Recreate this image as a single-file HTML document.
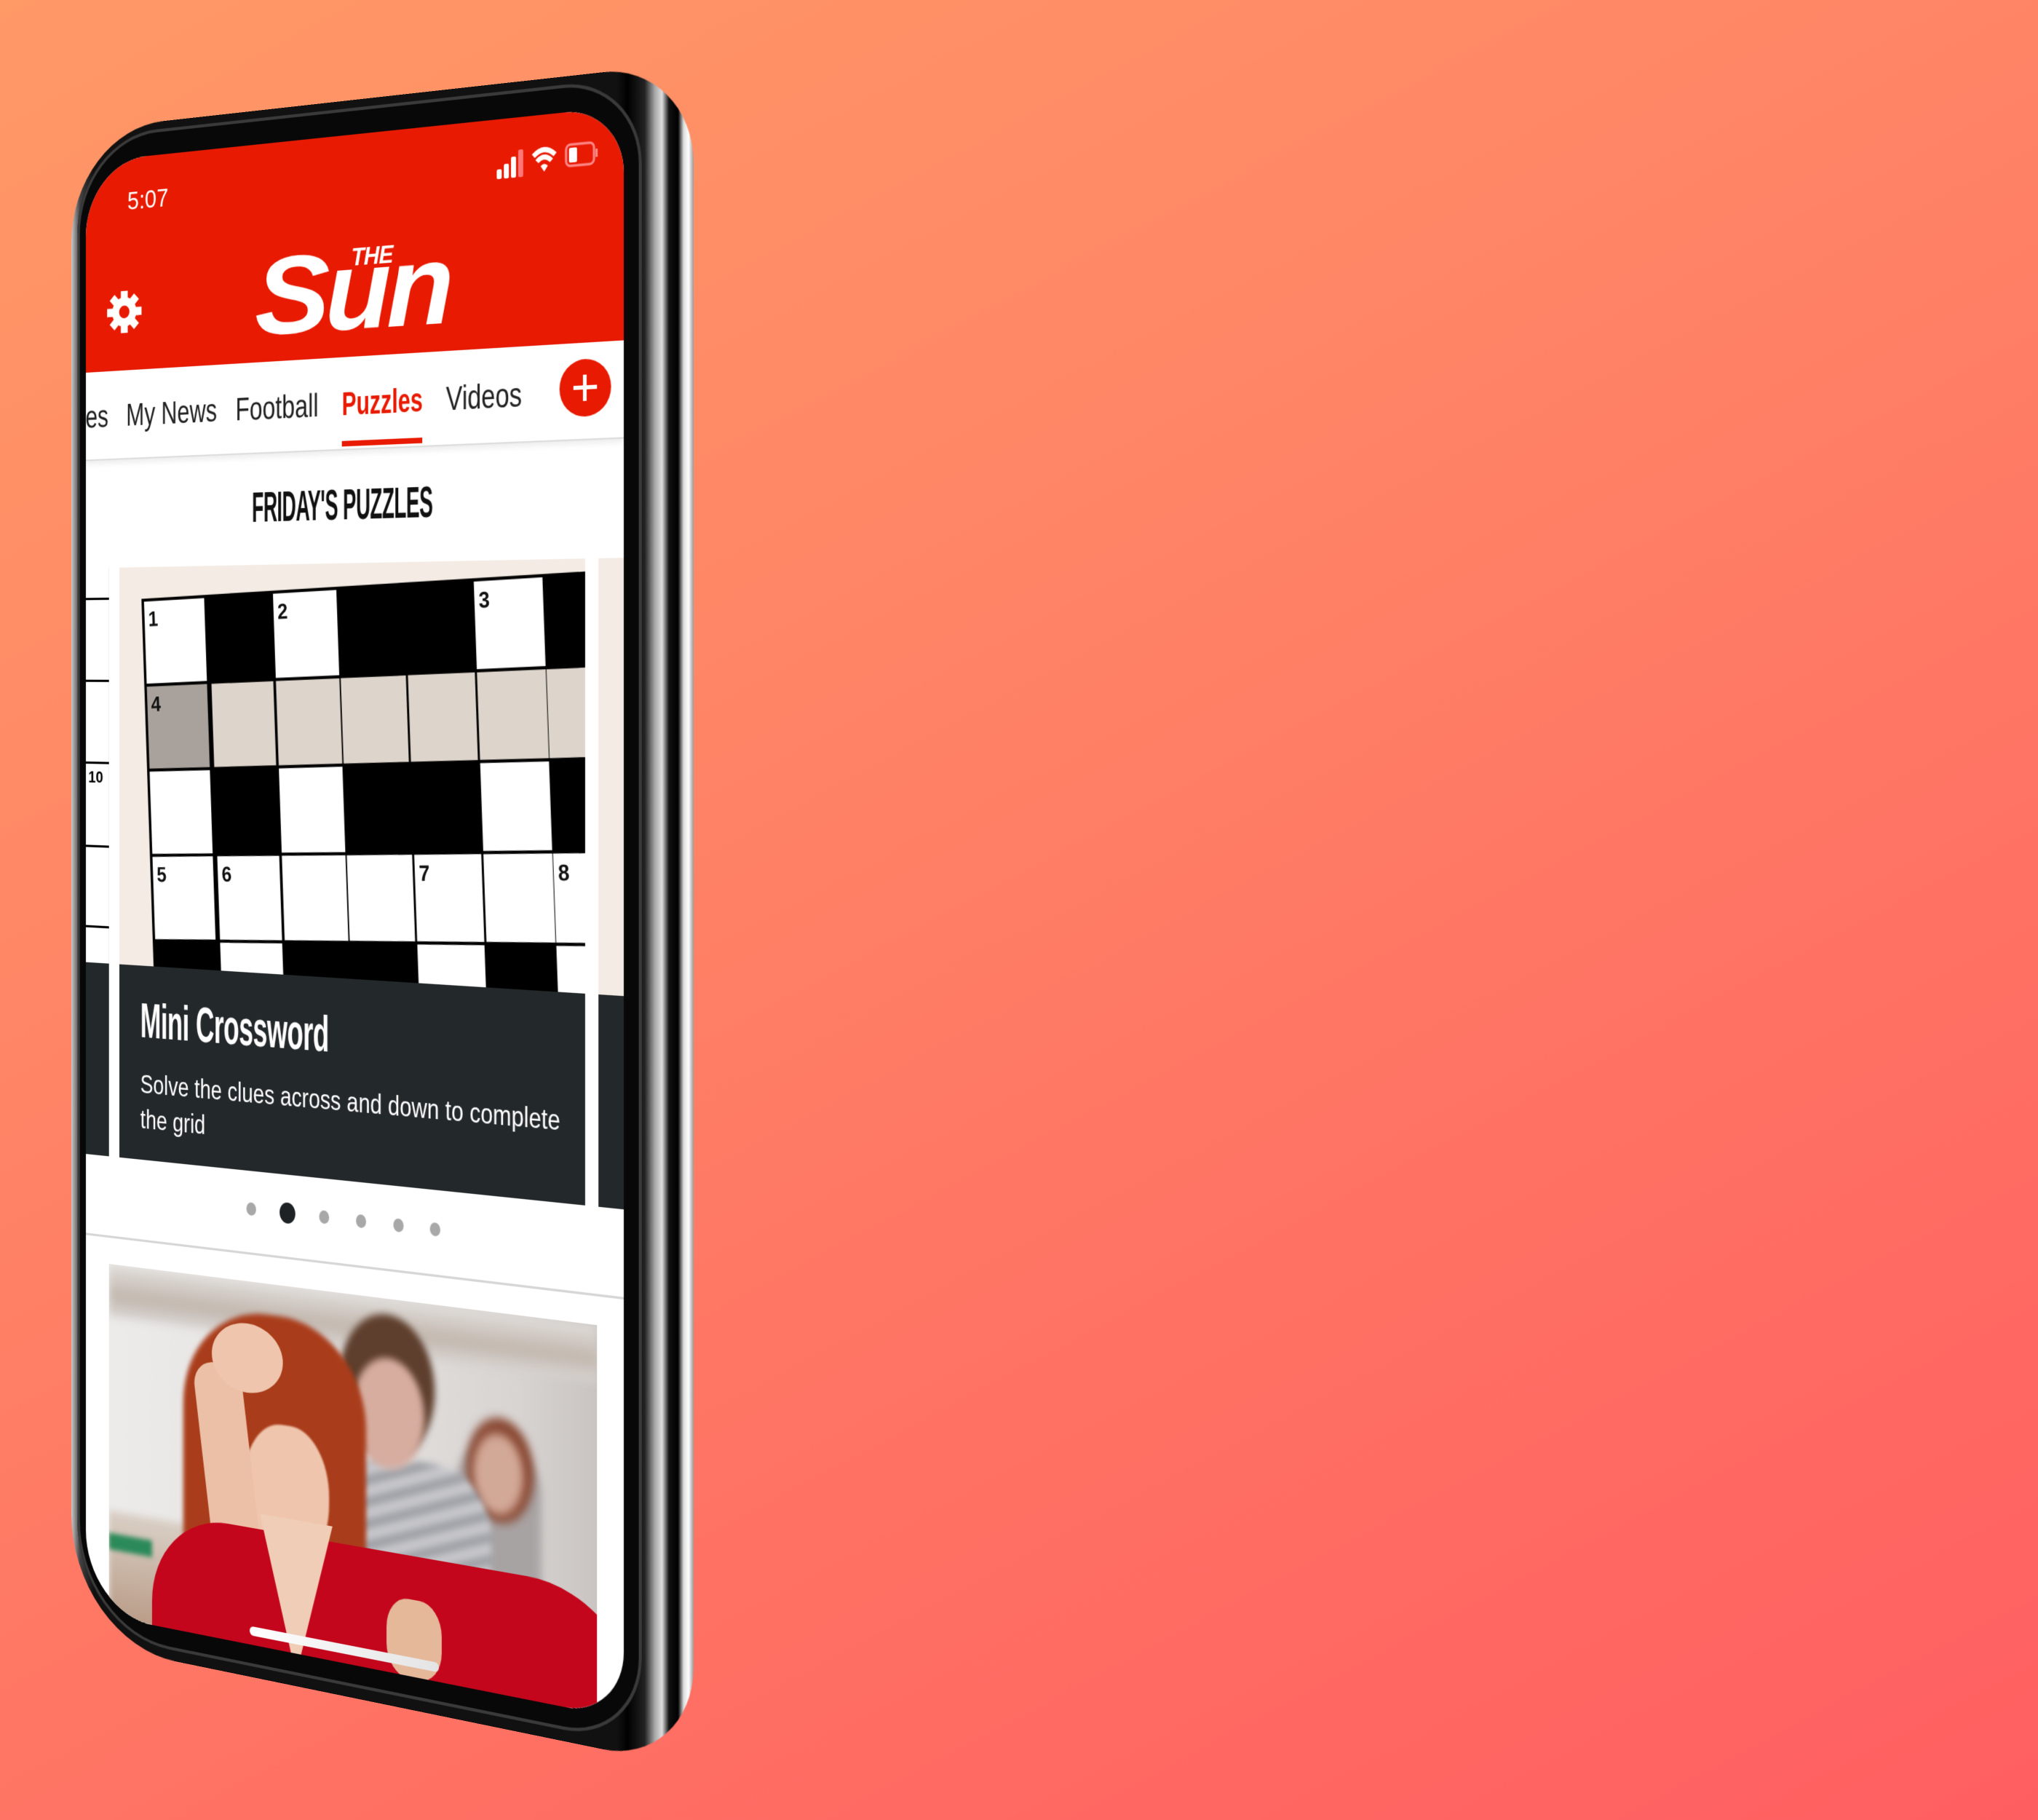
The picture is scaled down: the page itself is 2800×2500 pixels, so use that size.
<!DOCTYPE html>
<html><head><meta charset="utf-8">
<style>
*{margin:0;padding:0;box-sizing:border-box}
html,body{width:2800px;height:2500px;overflow:hidden}
body{background:linear-gradient(152deg,#ff9966 0%,#ff8666 35%,#ff7063 70%,#ff5e61 100%);font-family:"Liberation Sans",sans-serif;position:relative}
#phone{position:absolute;left:0;top:0;width:800px;height:1950px;transform-origin:0 0;
transform:matrix3d(0.815413,-0.114713,0,-0.000126413, 0,1.021026,0,0, 0,0,1,0, 118,223,0,1);}
.abs{position:absolute}
.frame{left:-24px;top:-44px;width:916px;height:2036px;border-radius:150px 120px 120px 170px;
background:linear-gradient(90deg,#c8c8c8 0%,#444 1.5%,#111 4%,#111 89%,#000 90.5%,#222 93%,#aaa 94.5%,#ddd 95.5%,#111 96.5%,#000 97.8%,#ddd 98.6%,#fff 99.3%,#999 100%);}
.bezel{left:-14px;top:-34px;width:838px;height:2012px;border-radius:130px 105px 105px 150px;background:#080808;
box-shadow:inset 0 0 0 4px #3a3a3a;}
.screen{left:0;top:0;width:800px;height:1950px;border-radius:100px 80px 80px 110px;overflow:hidden;background:#fff}
.hdr{left:0;top:0;width:800px;height:283px;background:#e81a02}
.nav{left:0;top:283px;width:800px;height:119px;background:#fff;border-bottom:2px solid #ddd;box-shadow:0 4px 8px rgba(0,0,0,.08)}
.nl{position:absolute;top:313px;font-size:42px;line-height:60px;color:#222;white-space:nowrap;transform-origin:0 50%}
.cell{position:absolute;width:96px;height:109px;background:#fff}
.cell b{position:absolute;left:6px;top:8px;font-size:28px;color:#111}
.blk{background:#000}
.lt{background:#ddd4cb}
.dk{background:#a9a29c}
.dot{position:absolute;border-radius:50%;background:#a8a8a8}
</style></head><body>
<div id="phone">
  <div class="abs frame"></div>
  <div class="abs bezel"></div>
  <div class="abs screen">
    <div class="abs hdr"></div>
    <div class="abs" style="left:68px;top:36px;font-size:34px;color:#fff;line-height:44px">5:07</div>
    <svg class="abs" style="left:620px;top:32px" width="150" height="48" viewBox="0 0 150 48">
      <rect x="6" y="30" width="7" height="12" rx="2" fill="#fff"/>
      <rect x="16" y="24" width="7" height="18" rx="2" fill="#fff"/>
      <rect x="26" y="16" width="7" height="26" rx="2" fill="#fff"/>
      <rect x="36" y="8" width="7" height="34" rx="2" fill="#f77"/>
      <path d="M57 18 Q72 4 87 18" stroke="#fff" stroke-width="6" fill="none"/>
      <path d="M62 25 Q72 15 82 25" stroke="#fff" stroke-width="6" fill="none"/>
      <path d="M67 31 L72 38 L77 31 Q72 26 67 31Z" fill="#fff"/>
      <rect x="102" y="8" width="38" height="26" rx="6" stroke="#f88" stroke-width="3" fill="none"/>
      <rect x="106" y="12" width="11" height="18" rx="2" fill="#fff"/>
      <rect x="142" y="16" width="3" height="10" fill="#f88"/>
    </svg>
    <svg class="abs" style="left:34px;top:176px" width="58" height="58" viewBox="-31 -31 62 62">
      <g fill="#fff">
        <circle r="21"/>
        <rect x="-6" y="-30" width="12" height="60"/>
        <rect x="-6" y="-30" width="12" height="60" transform="rotate(45)"/>
        <rect x="-6" y="-30" width="12" height="60" transform="rotate(90)"/>
        <rect x="-6" y="-30" width="12" height="60" transform="rotate(135)"/>
      </g>
      <circle r="9" fill="#e81a02"/>
    </svg>
    <div class="abs" style="left:270px;top:128px;font-size:143px;line-height:143px;font-weight:bold;font-style:italic;color:#fff;white-space:nowrap;letter-spacing:-6px">
      <span style="display:inline-block;transform:scaleX(1.2);transform-origin:0 0;margin-right:18px">S</span><span style="display:inline-block;transform:scaleX(1.12);transform-origin:0 0">un</span></div>
    <div class="abs" style="left:416px;top:140px;font-size:32px;line-height:32px;font-weight:bold;font-style:italic;color:#fff;letter-spacing:-1px">THE</div>
    <div class="abs nav"></div>
    <div class="nl" style="left:-78px;transform:scaleX(.85)">Games</div>
    <div class="nl" style="left:66px;transform:scaleX(.84)">My News</div>
    <div class="nl" style="left:240px;transform:scaleX(.85)">Football</div>
    <div class="nl" style="left:402px;transform:scaleX(.77);color:#e81a02;font-weight:bold">Puzzles</div>
    <div class="nl" style="left:554px;transform:scaleX(.84)">Videos</div>
    <div class="abs" style="left:402px;top:390px;width:118px;height:7px;background:#e81a02"></div>
    <div class="abs" style="left:713px;top:303px;width:70px;height:70px;border-radius:50%;background:#e81a02"></div>
    <div class="abs" style="left:745px;top:322px;width:5px;height:32px;background:#fff"></div>
    <div class="abs" style="left:732px;top:335px;width:32px;height:5px;background:#fff"></div>
    <div class="abs" style="left:0;width:800px;top:440px;text-align:center;white-space:nowrap">
      <span style="display:inline-block;font-size:56px;line-height:62px;font-weight:bold;color:#111;transform:scaleX(.53);letter-spacing:-1px">FRIDAY'S PUZZLES</span></div>
    <div class="abs" style="left:-20px;top:546px;width:58px;height:530px;background:#fff;border-right:1px solid #eee">
      <div class="abs" style="left:0;top:40px;width:58px;height:3px;background:#000"></div>
      <div class="abs" style="left:0;top:150px;width:58px;height:3px;background:#000"></div>
      <div class="abs" style="left:0;top:260px;width:58px;height:3px;background:#000"></div>
      <div class="abs" style="left:24px;top:268px;font-size:22px;font-weight:bold">10</div>
      <div class="abs" style="left:0;top:372px;width:58px;height:3px;background:#000"></div>
      <div class="abs" style="left:0;top:480px;width:58px;height:3px;background:#000"></div>
    </div>
    <div class="abs" style="left:-20px;top:1076px;width:58px;height:258px;background:#23282a"></div>
    <div class="abs" style="left:766px;top:546px;width:60px;height:530px;background:#f4ece4"></div>
    <div class="abs" style="left:766px;top:1076px;width:60px;height:258px;background:#23282a"></div>
    <div class="abs" style="left:55px;top:546px;width:693px;height:788px;overflow:hidden;background:#f4ece4">
      <div class="abs" style="left:0;top:0;width:760px;height:600px;transform:rotate(-2.3deg);transform-origin:40px 46px">
      <div class="abs" style="left:36px;top:42px;width:720px;height:560px;background:#000"></div>
      <div class="cell" style="left:40px;top:46px"><b>1</b></div>
      <div class="cell blk" style="left:143px;top:46px"></div>
      <div class="cell" style="left:243px;top:46px"><b>2</b></div>
      <div class="cell blk" style="left:341px;top:46px"></div>
      <div class="cell blk" style="left:440px;top:46px"></div>
      <div class="cell" style="left:539px;top:46px"><b>3</b></div>
      <div class="cell blk" style="left:636px;top:46px"></div>
      <div class="cell dk" style="left:40px;top:159px"><b>4</b></div>
      <div class="cell lt" style="left:143px;top:159px"></div>
      <div class="cell lt" style="left:243px;top:159px"></div>
      <div class="cell lt" style="left:341px;top:159px"></div>
      <div class="cell lt" style="left:440px;top:159px"></div>
      <div class="cell lt" style="left:539px;top:159px"></div>
      <div class="cell lt" style="left:636px;top:159px"></div>
      <div class="cell" style="left:40px;top:272px"></div>
      <div class="cell blk" style="left:143px;top:272px"></div>
      <div class="cell" style="left:243px;top:272px"></div>
      <div class="cell blk" style="left:341px;top:272px"></div>
      <div class="cell blk" style="left:440px;top:272px"></div>
      <div class="cell" style="left:539px;top:272px"></div>
      <div class="cell blk" style="left:636px;top:272px"></div>
      <div class="cell" style="left:40px;top:385px"><b>5</b></div>
      <div class="cell" style="left:143px;top:385px"><b>6</b></div>
      <div class="cell" style="left:243px;top:385px"></div>
      <div class="cell" style="left:341px;top:385px"></div>
      <div class="cell" style="left:440px;top:385px"><b>7</b></div>
      <div class="cell" style="left:539px;top:385px"></div>
      <div class="cell" style="left:636px;top:385px"><b>8</b></div>
      <div class="cell blk" style="left:40px;top:498px"></div>
      <div class="cell" style="left:143px;top:498px"></div>
      <div class="cell blk" style="left:243px;top:498px"></div>
      <div class="cell blk" style="left:341px;top:498px"></div>
      <div class="cell" style="left:440px;top:498px"></div>
      <div class="cell blk" style="left:539px;top:498px"></div>
      <div class="cell" style="left:636px;top:498px"></div>
      </div>
      <div class="abs" style="left:0;top:530px;width:693px;height:258px;background:#23282a"></div>
      <div class="abs" style="left:34px;top:568px;font-size:64px;line-height:70px;font-weight:bold;color:#fff;white-space:nowrap;transform:scaleX(.63);transform-origin:0 0;letter-spacing:-1px">Mini Crossword</div>
      <div class="abs" style="left:34px;top:664px;font-size:35px;line-height:47px;color:#fff;white-space:nowrap;transform:scaleX(.89);transform-origin:0 0">Solve the clues across and down to complete<br>the grid</div>
    </div>
    <div class="dot" style="left:257px;top:1375px;width:15px;height:17px"></div>
    <div class="dot" style="left:308px;top:1370px;width:24px;height:27px;background:#1e2224"></div>
    <div class="dot" style="left:368px;top:1375px;width:15px;height:17px"></div>
    <div class="dot" style="left:423px;top:1375px;width:15px;height:17px"></div>
    <div class="dot" style="left:478px;top:1375px;width:15px;height:17px"></div>
    <div class="dot" style="left:531px;top:1375px;width:15px;height:17px"></div>
    <div class="abs" style="left:0;top:1440px;width:800px;height:3px;background:#d6d6d6"></div>
    <div class="abs" style="left:38px;top:1478px;width:726px;height:480px;overflow:hidden;background:linear-gradient(90deg,#ecebea 0%,#e4e2e0 50%,#d8d4d2 85%,#c9c4c2 100%)">
      <div class="abs" style="left:0;top:0;width:726px;height:70px;background:linear-gradient(180deg,#e0ddda,#c2b7ae 60%,#d8d4d2);filter:blur(6px)"></div>
      <div class="abs" style="left:0;top:330px;width:130px;height:150px;background:linear-gradient(180deg,#d9cfc5,#b89a85);filter:blur(5px)"></div>
      <div class="abs" style="left:0;top:360px;width:70px;height:22px;background:#2b8a5a;filter:blur(3px)"></div>
      <div class="abs" style="left:530px;top:160px;width:120px;height:320px;border-radius:60px 60px 20px 20px;background:#a8a3a3;filter:blur(6px)"></div>
      <div class="abs" style="left:545px;top:130px;width:95px;height:130px;border-radius:50%;background:#8a4a35;filter:blur(6px)"></div>
      <div class="abs" style="left:555px;top:150px;width:70px;height:100px;border-radius:50%;background:#d2a896;filter:blur(6px)"></div>
      <div class="abs" style="left:360px;top:200px;width:220px;height:300px;border-radius:80px 80px 0 0;background:repeating-linear-gradient(160deg,#c8c8cc 0 14px,#9ea0a6 14px 26px);filter:blur(4px)"></div>
      <div class="abs" style="left:360px;top:20px;width:140px;height:180px;border-radius:50%;background:#5e3e2c;filter:blur(5px)"></div>
      <div class="abs" style="left:380px;top:75px;width:105px;height:140px;border-radius:50%;background:#d7ada0;filter:blur(5px)"></div>
      <!-- woman hair -->
      <div class="abs" style="left:120px;top:40px;width:280px;height:460px;border-radius:130px 130px 40px 40px;background:#a93d1b;filter:blur(3px)"></div>
      <!-- face -->
      <div class="abs" style="left:215px;top:180px;width:130px;height:185px;border-radius:45% 45% 50% 50%;background:#efc6ad;filter:blur(1px)"></div>
      <!-- arm & hand -->
      <div class="abs" style="left:150px;top:110px;width:75px;height:240px;border-radius:30px;background:#ecc0a6;transform:rotate(-8deg)"></div>
      <div class="abs" style="left:165px;top:55px;width:110px;height:90px;border-radius:50%;background:#efc6ad"></div>
      <!-- red top -->
      <div class="abs" style="left:70px;top:320px;width:720px;height:260px;border-radius:120px 160px 0 0;background:#c4061c"></div>
      <div class="abs" style="left:240px;top:300px;width:110px;height:200px;background:#f0cdb6;clip-path:polygon(0 0,100% 0,50% 100%)"></div>
      <div class="abs" style="left:430px;top:375px;width:80px;height:100px;border-radius:40%;background:#e5b89a"></div>
    </div>
    <div class="abs" style="left:262px;top:1926px;width:282px;height:12px;border-radius:6px;background:linear-gradient(90deg,#fff,#e4e4e4)"></div>
  </div>
</div>
</body></html>
